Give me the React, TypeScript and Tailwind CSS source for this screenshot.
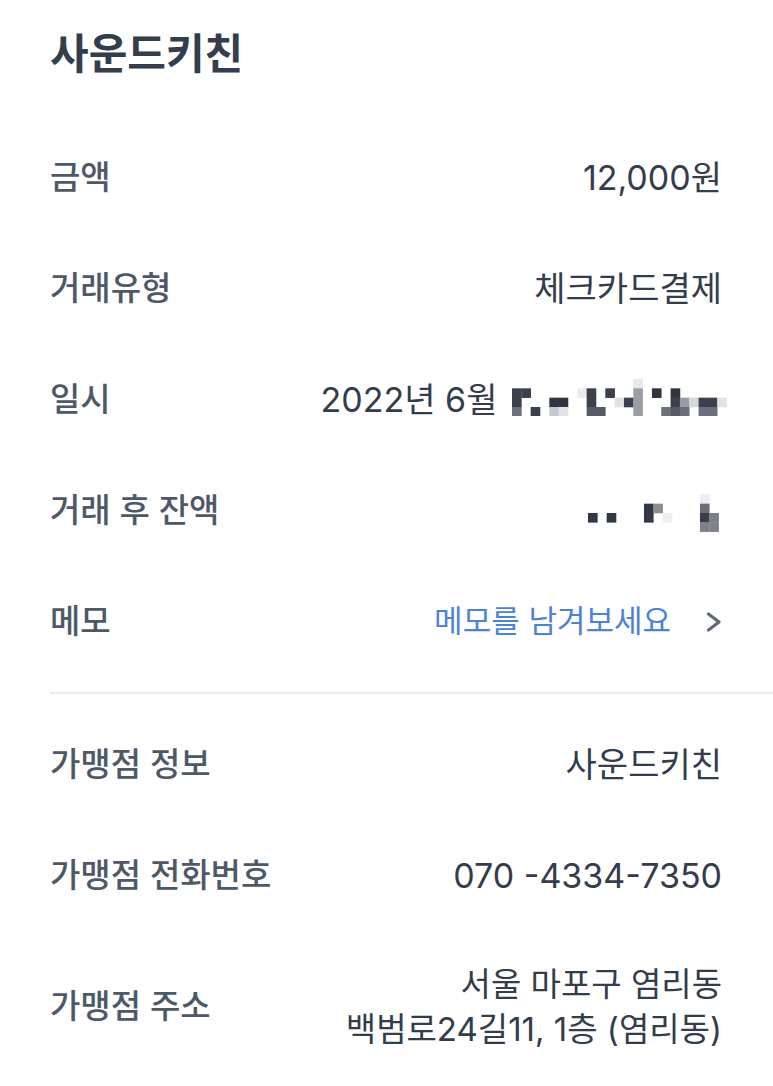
const font = { fontFamily: '"Inter", "Noto Sans CJK KR", sans-serif' };

function Row({ label, children, tall }: { label: string; children: React.ReactNode; tall?: boolean }) {
  return (
    <div className={`flex items-center justify-between pr-[51px] ${tall ? "py-[31px]" : "h-[111px]"}`}>
      <span className="text-[33px] font-medium text-[#4e5968]">{label}</span>
      <div className="flex items-center text-right text-[34px] text-[#333d4b]">{children}</div>
    </div>
  );
}

// blurred (mosaic) parts of the original capture
const dateCells: [number, number, string][] = [
  [0, 1, "#3b404c"], [1, 1, "#3b404c"], [0, 2, "#3b404c"], [0, 3, "#6b707a"], [2, 3, "#3b404c"],
  [4, 2, "#2f3440"], [5, 2, "#2f3440"], [4, 3, "#c5c7cc"], [5, 3, "#e3e4e7"],
  [7, 1, "#ececee"], [8, 1, "#3b404c"], [8, 2, "#3b404c"], [8, 3, "#555a66"], [9, 3, "#555a66"],
  [10, 1, "#3b404c"], [11, 2, "#e1e2e5"], [12, 2, "#3b404c"], [13, 0, "#e8e9eb"], [13, 1, "#9a9da3"],
  [13, 2, "#9a9da3"], [13, 3, "#9a9da3"],
  [15, 1, "#2f3440"], [16, 3, "#6b707a"], [17, 1, "#2f3440"], [17, 2, "#3b404c"], [17, 3, "#555a66"],
  [18, 2, "#9a9da3"], [18, 3, "#6b707a"], [19, 2, "#d6d7da"], [20, 2, "#3b404c"], [21, 2, "#3b404c"],
  [20, 3, "#6b707a"], [21, 3, "#6b707a"], [22, 2, "#e1e2e5"],
];

const balanceCells: [number, number, string][] = [
  [0, 3, "#333846"], [2, 3, "#333846"], [6, 2, "#333846"], [6, 3, "#333846"], [7, 2, "#8a8d94"],
  [8, 3, "#eeeff1"], [12, 1, "#eeeef2"], [12, 2, "#6b6f78"], [12, 3, "#3a3e4a"],
  [12, 4, "#7d8089"], [13, 3, "#7d8089"], [13, 4, "#7d8089"],
];

function Mosaic({ cells, cols, rows }: { cells: [number, number, string][]; cols: number; rows: number }) {
  const s = 9.33;
  return (
    <svg width={cols * s} height={rows * s} viewBox={`0 0 ${cols * s} ${rows * s}`}>
      {cells.map(([c, r, fill], i) => (
        <rect key={i} x={c * s} y={r * s} width={s + 0.3} height={s + 0.3} fill={fill} />
      ))}
    </svg>
  );
}

export default function App() {
  return (
    <div className="min-h-[1086px] w-[773px] bg-white pl-[50px]" style={font}>
      <h1 className="mb-[16px] flex h-[106px] items-center text-[42px] font-bold text-[#333d4b]">
        사운드키친
      </h1>

      <Row label="금액">12,000원</Row>
      <Row label="거래유형">체크카드결제</Row>
      <Row label="일시">
        <span>2022년 6월</span>
        <span className="-mr-[5px] ml-[15px] mt-[-4px]">
          <Mosaic cells={dateCells} cols={23} rows={4} />
        </span>
      </Row>
      <Row label="거래 후 잔액">
        <span className="mr-[3px] mt-[-4px]">
          <Mosaic cells={balanceCells} cols={14} rows={5} />
        </span>
      </Row>
      <Row label="메모">
        <span className="text-[31px] text-[#4d83d6]">메모를 남겨보세요</span>
        <svg className="ml-[35px]" width="16" height="20" viewBox="0 0 16 20" fill="none">
          <path d="M2.5 2 L13 10 L2.5 18" stroke="#626a76" strokeWidth="3.2" strokeLinecap="round" strokeLinejoin="round" />
        </svg>
      </Row>

      <div className="my-[15px] h-[2px] bg-[#e9ebee]" />

      <Row label="가맹점 정보">사운드키친</Row>
      <Row label="가맹점 전화번호">070 -4334-7350</Row>
      <Row label="가맹점 주소" tall>
        <div className="text-[33px] leading-[45px]">
          서울 마포구 염리동
          <br />
          백범로24길11, 1층 (염리동)
        </div>
      </Row>
    </div>
  );
}
